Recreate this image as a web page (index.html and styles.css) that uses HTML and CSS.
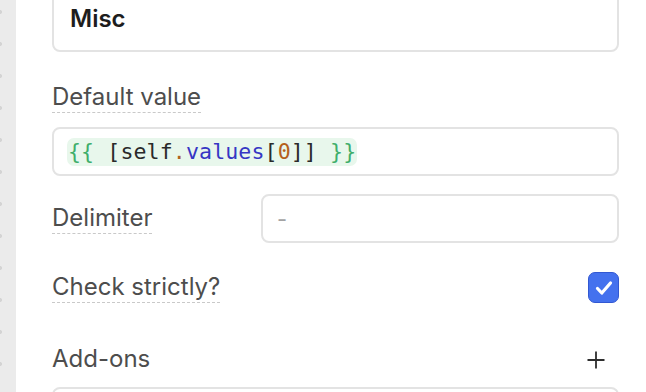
FILE: index.html
```html
<!DOCTYPE html>
<html>
<head>
<meta charset="utf-8">
<link rel="stylesheet" href="styles.css">
</head>
<body>
<div class="page">
  <div class="rail"></div>
  <div class="main">
    <div class="field field-title">Misc</div>

    <div class="label-line"><span class="label dashed">Default value</span></div>
    <div class="field field-code">
      <span class="code"><span class="c-brace">{{</span> <span class="c-punc">[</span><span class="c-id">self</span><span class="c-dot">.</span><span class="c-prop">values</span><span class="c-punc">[</span><span class="c-num">0</span><span class="c-punc">]]</span> <span class="c-brace">}}</span></span>
    </div>

    <div class="row row-delim">
      <div class="row-label"><span class="label dashed">Delimiter</span></div>
      <div class="field field-input"><span class="placeholder">-</span></div>
    </div>

    <div class="row row-check">
      <span class="label dashed">Check strictly?</span>
      <span class="checkbox">
        <svg width="31" height="31" viewBox="0 0 31 31"><path d="M9.5 16.5 L13.8 21 L22.5 11" fill="none" stroke="#fff" stroke-width="3.2" stroke-linecap="round" stroke-linejoin="round"/></svg>
      </span>
    </div>

    <div class="row row-addons">
      <span class="label">Add-ons</span>
      <svg class="plus" width="18" height="18" viewBox="0 0 18 18"><path d="M9 0.5 V17.5 M0.5 9 H17.5" stroke="#2e2e2e" stroke-width="1.8" fill="none"/></svg>
    </div>

    <div class="field field-next"></div>
  </div>
</div>
</body>
</html>
```

FILE: styles.css
```css
html, body {
  margin: 0;
  padding: 0;
  background: #ffffff;
  overflow: hidden;
}

.page {
  display: flex;
  height: 392px;
  font-family: Inter, "Noto Sans", sans-serif;
}

.rail {
  width: 16px;
  flex: none;
  background-color: #ebebeb;
  background-image: radial-gradient(circle at 0 16px, #d4d4d4 0, #d4d4d4 1.6px, rgba(235,235,235,0) 2.4px);
  background-size: 16px 32px;
  background-position: 0 -4px;
}

.main {
  flex: 1;
  padding: 0 27px 0 36px;
  display: flex;
  flex-direction: column;
}

.field {
  box-sizing: border-box;
  border: 2px solid #e3e3e3;
  border-radius: 8px;
  background: #fff;
  display: flex;
  align-items: center;
}

.field-title {
  margin-top: -10px;
  height: 62px;
  padding: 0 16px 6px;
  font-size: 24px;
  font-weight: 600;
  color: #1d1d1d;
  flex: none;
}

.label-line {
  margin-top: 30px;
  line-height: 30px;
  height: 31px;
}

.label {
  font-size: 24px;
  line-height: 30px;
  color: #4d4d4d;
  display: inline-block;
}

.dashed {
  border-bottom: 1px dashed #c9c9c9;
}

.field-code {
  margin-top: 14px;
  height: 49px;
  padding: 0 13px;
  flex: none;
}

.code {
  font-family: "DejaVu Sans Mono", "Liberation Mono", monospace;
  font-size: 21.6px;
  line-height: 28px;
  height: 28px;
  background: #e8f7ec;
  border-radius: 7px;
  padding: 0 1px;
  white-space: pre;
  letter-spacing: 0.1px;
}

.c-brace { color: #3fae6b; }
.c-punc { color: #2a2a2a; }
.c-id { color: #2a2a2a; }
.c-dot { color: #b0651f; }
.c-prop { color: #3636c4; }
.c-num { color: #b5611c; }

.row {
  display: flex;
  align-items: center;
  flex: none;
}

.row-delim {
  margin-top: 18px;
}

.row-label {
  width: 209px;
  flex: none;
  display: flex;
  align-items: center;
}

.field-input {
  flex: 1;
  height: 49px;
  padding: 0 14px;
}

.placeholder {
  font-size: 22px;
  color: #a3a3a3;
}

.row-check {
  margin-top: 29px;
  justify-content: space-between;
  height: 31px;
}

.checkbox {
  box-sizing: border-box;
  width: 31px;
  height: 31px;
  border-radius: 7px;
  background: #4471ee;
  border: 1.5px solid #3258d2;
  display: flex;
  align-items: center;
  justify-content: center;
}

.checkbox svg {
  display: block;
  margin: -1.5px;
}

.row-addons {
  margin-top: 41px;
  height: 30px;
  justify-content: space-between;
}

.plus {
  display: block;
  margin-right: 14px;
  margin-top: 2px;
}

.field-next {
  margin-top: 13px;
  height: 60px;
  flex: none;
}
```
